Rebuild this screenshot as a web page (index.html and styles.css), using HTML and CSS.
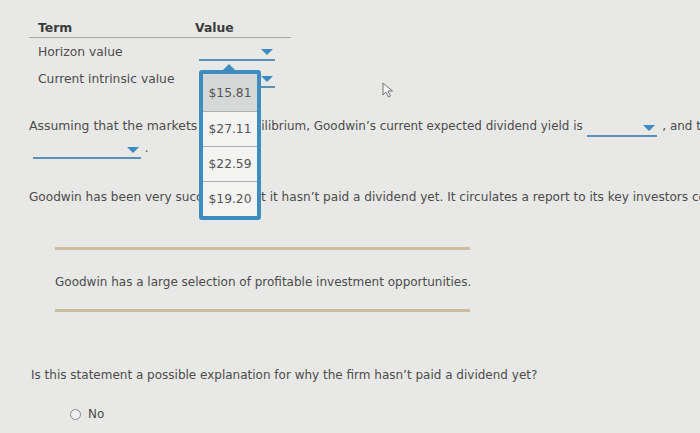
FILE: index.html
```
<!DOCTYPE html>
<html>
<head>
<meta charset="utf-8">
<link rel="stylesheet" href="styles.css">
</head>
<body>
<div class="page">
  <div class="terms">
    <div class="row head">
      <div class="c1">Term</div>
      <div class="c2">Value</div>
    </div>
    <div class="row">
      <div class="c1">Horizon value</div>
      <div class="c2"><span class="dd dd-table"><span class="tri"></span></span></div>
    </div>
    <div class="row">
      <div class="c1">Current intrinsic value</div>
      <div class="c2"><span class="dd dd-table"><span class="tri"></span></span></div>
    </div>
  </div>

  <p class="p1"><span class="lead">Assuming that the markets</span> are in equilibrium, Goodwin’s current expected dividend yield is <span class="dd dd-yield"><span class="tri"></span></span> , and the expected capital gains yield is<br><span class="dd dd-gain"><span class="tri"></span></span> .</p>

  <p class="p2">Goodwin has been very successful, but it hasn’t paid a dividend yet. It circulates a report to its key investors containing the following statements.</p>

  <div class="statement">
    <div class="rule"></div>
    <p class="stmt-text">Goodwin has a large selection of profitable investment opportunities.</p>
    <div class="rule"></div>
  </div>

  <p class="question">Is this statement a possible explanation for why the firm hasn’t paid a dividend yet?</p>

  <div class="radio"><span class="dot"></span><span>No</span></div>
</div>

<div class="menu">
  <div class="opt sel">$15.81</div>
  <div class="opt">$27.11</div>
  <div class="opt">$22.59</div>
  <div class="opt">$19.20</div>
</div>

<svg class="cursor" width="12" height="16" viewBox="0 0 12 16"><path d="M1 1 L1 13 L4 10 L6.5 15 L8.5 14 L6 9 L10.5 9 Z" fill="#f6f6f6" stroke="#707070" stroke-width="1" stroke-linejoin="round"/></svg>
</body>
</html>
```
FILE: styles.css
```
html, body {
  margin: 0;
  padding: 0;
}
body {
  background: #e8e8e6;
  width: 700px;
  height: 433px;
  overflow: hidden;
  position: relative;
  font-family: "DejaVu Sans", Verdana, sans-serif;
  color: #4c4c4c;
}
.page {
  padding: 17px 0 0 29px;
  width: 900px;
}
.terms {
  width: 262px;
  font-size: 12.3px;
}
.row {
  display: grid;
  grid-template-columns: 166px 96px;
  height: 27px;
  align-items: center;
}
.row .c1 {
  padding-left: 9px;
}
.row.head {
  height: 20px;
  border-bottom: 1px solid #a9a9a9;
  font-weight: bold;
  color: #3c3c3c;
  font-size: 12.4px;
}
.row:not(.head) .c2 {
  align-self: end;
  padding-bottom: 4px;
}
.dd {
  display: inline-flex;
  justify-content: flex-end;
  align-items: flex-start;
  height: 12px;
  border-bottom: 2px solid #5a8fb6;
  box-sizing: content-box;
}
.tri {
  width: 0;
  height: 0;
  border-left: 6.5px solid transparent;
  border-right: 6.5px solid transparent;
  border-top: 6px solid #3a8cc2;
  margin: 2px 2px 0 0;
}
.dd-table {
  width: 76px;
  margin-left: 4px;
  vertical-align: bottom;
}
.p1 {
  margin: 23px 0 0 0;
  font-size: 11.95px;
  line-height: 22px;
  white-space: nowrap;
}
.lead {
  font-size: 12.4px;
}
.dd-yield {
  width: 70px;
  vertical-align: -1px;
  margin: 0 2px 0 0;
}
.dd-gain {
  width: 108px;
  margin-left: 4px;
  vertical-align: -1px;
}
.p2 {
  margin: 26px 0 0 0;
  font-size: 12.1px;
  line-height: 24px;
  white-space: nowrap;
}
.statement {
  margin: 38px 0 0 26px;
  width: 415px;
}
.rule {
  height: 3px;
  background: #cbbd9f;
}
.stmt-text {
  margin: 0;
  padding: 25px 0 20px;
  font-size: 12px;
  line-height: 14px;
  white-space: nowrap;
}
.question {
  margin: 56px 0 0 2px;
  font-size: 12px;
  line-height: 14px;
  white-space: nowrap;
}
.radio {
  margin: 25px 0 0 41px;
  display: flex;
  align-items: center;
  gap: 7px;
  font-size: 12px;
}
.dot {
  width: 9px;
  height: 9px;
  border: 1.5px solid #8a8a8a;
  border-radius: 50%;
  background: #f0f0f0;
}
.menu {
  position: absolute;
  left: 199px;
  top: 70px;
  width: 54px;
  border: 4px solid #3d8dc0;
  border-radius: 3px;
  background: #f3f3f2;
  font-size: 12.3px;
  color: #555;
}
.menu::before {
  content: "";
  position: absolute;
  left: 20px;
  top: -10px;
  border-left: 6px solid transparent;
  border-right: 6px solid transparent;
  border-bottom: 6px solid #3d8dc0;
}
.opt {
  height: 34px;
  display: flex;
  align-items: center;
  justify-content: center;
  border-top: 1px solid #a9b0b4;
}
.opt:first-child {
  border-top: none;
  height: 37px;
}
.opt.sel {
  background: #d6d8d8;
}
.cursor {
  position: absolute;
  left: 382px;
  top: 82px;
}
```
